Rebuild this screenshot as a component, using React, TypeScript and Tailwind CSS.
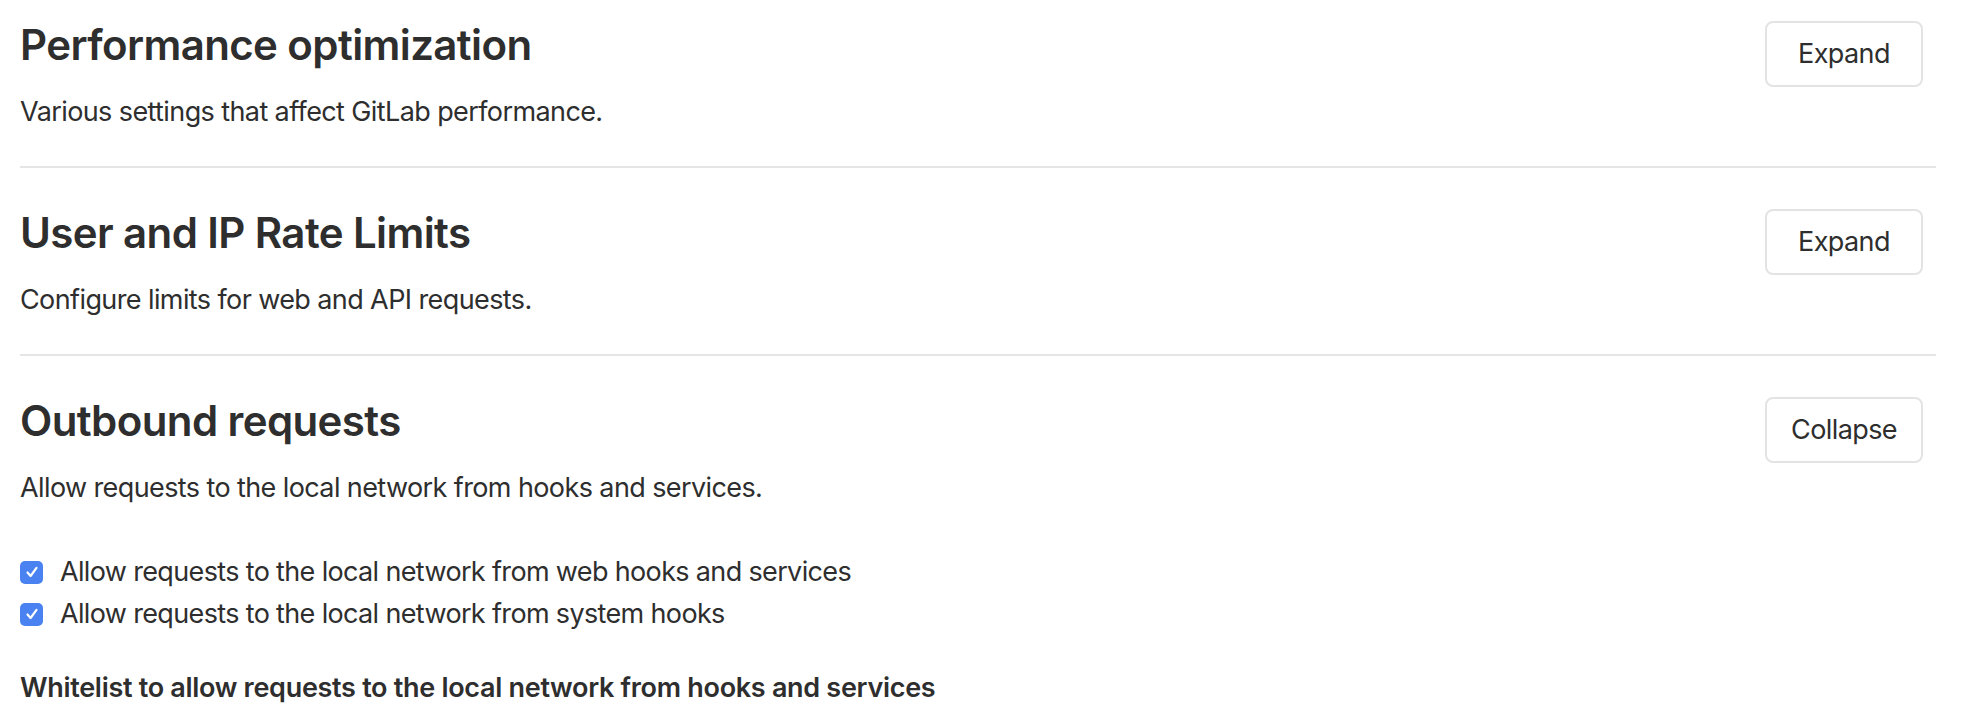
import React from "react";

function Check() {
  return (
    <span className="flex h-[23px] w-[23px] shrink-0 items-center justify-center rounded-[5px] bg-[#4a82f1]">
      <svg width="16" height="16" viewBox="0 0 16 16" fill="none">
        <path d="M3.5 8.5 L6.6 12 L12.5 3.8" stroke="white" strokeWidth="2.2" strokeLinecap="round" strokeLinejoin="round" />
      </svg>
    </span>
  );
}

function Section({
  title,
  desc,
  button,
  first,
  last,
  children,
}: {
  title: string;
  desc: string;
  button: string;
  first?: boolean;
  last?: boolean;
  children?: React.ReactNode;
}) {
  return (
    <section
      className={
        (first ? "pt-[20px] " : "pt-[40px] ") +
        (last ? "" : "pb-[33px] border-b-2 border-[#e5e5e5]")
      }
    >
      <div className="flex items-start justify-between">
        <div>
          <h4 className="text-[42px] leading-[50px] font-semibold tracking-[-0.6px] text-[#2e2e2e]">{title}</h4>
          <p className="mt-[21px] text-[27px] leading-[42px] tracking-[-0.6px] text-[#2e2e2e]">{desc}</p>
        </div>
        <button className="mr-[13px] mt-px h-[66px] w-[158px] rounded-[8px] border-2 border-[#e3e3e3] bg-white text-[27px] tracking-[-0.6px] text-[#2e2e2e]">
          {button}
        </button>
      </div>
      {children}
    </section>
  );
}

export default function App() {
  return (
    <div
      className="h-[724px] overflow-hidden bg-white pl-[20px] pr-[30px] text-[#2e2e2e]"
      style={{ fontFamily: "Inter, 'Noto Sans', sans-serif" }}
    >
      <Section
        first
        title="Performance optimization"
        desc="Various settings that affect GitLab performance."
        button="Expand"
      />
      <Section
        title="User and IP Rate Limits"
        desc="Configure limits for web and API requests."
        button="Expand"
      />
      <Section
        last
        title="Outbound requests"
        desc="Allow requests to the local network from hooks and services."
        button="Collapse"
      >
        <div className="mt-[42px] flex flex-col">
          <label className="flex h-[42px] items-center gap-[17px] text-[27px] tracking-[-0.65px]">
            <Check />
            <span>Allow requests to the local network from web hooks and services</span>
          </label>
          <label className="flex h-[42px] items-center gap-[17px] text-[27px] tracking-[-0.65px]">
            <Check />
            <span>Allow requests to the local network from system hooks</span>
          </label>
        </div>
        <div className="mt-[32px] text-[27px] leading-[42px] font-semibold tracking-[-0.3px]">
          Whitelist to allow requests to the local network from hooks and services
        </div>
      </Section>
    </div>
  );
}
